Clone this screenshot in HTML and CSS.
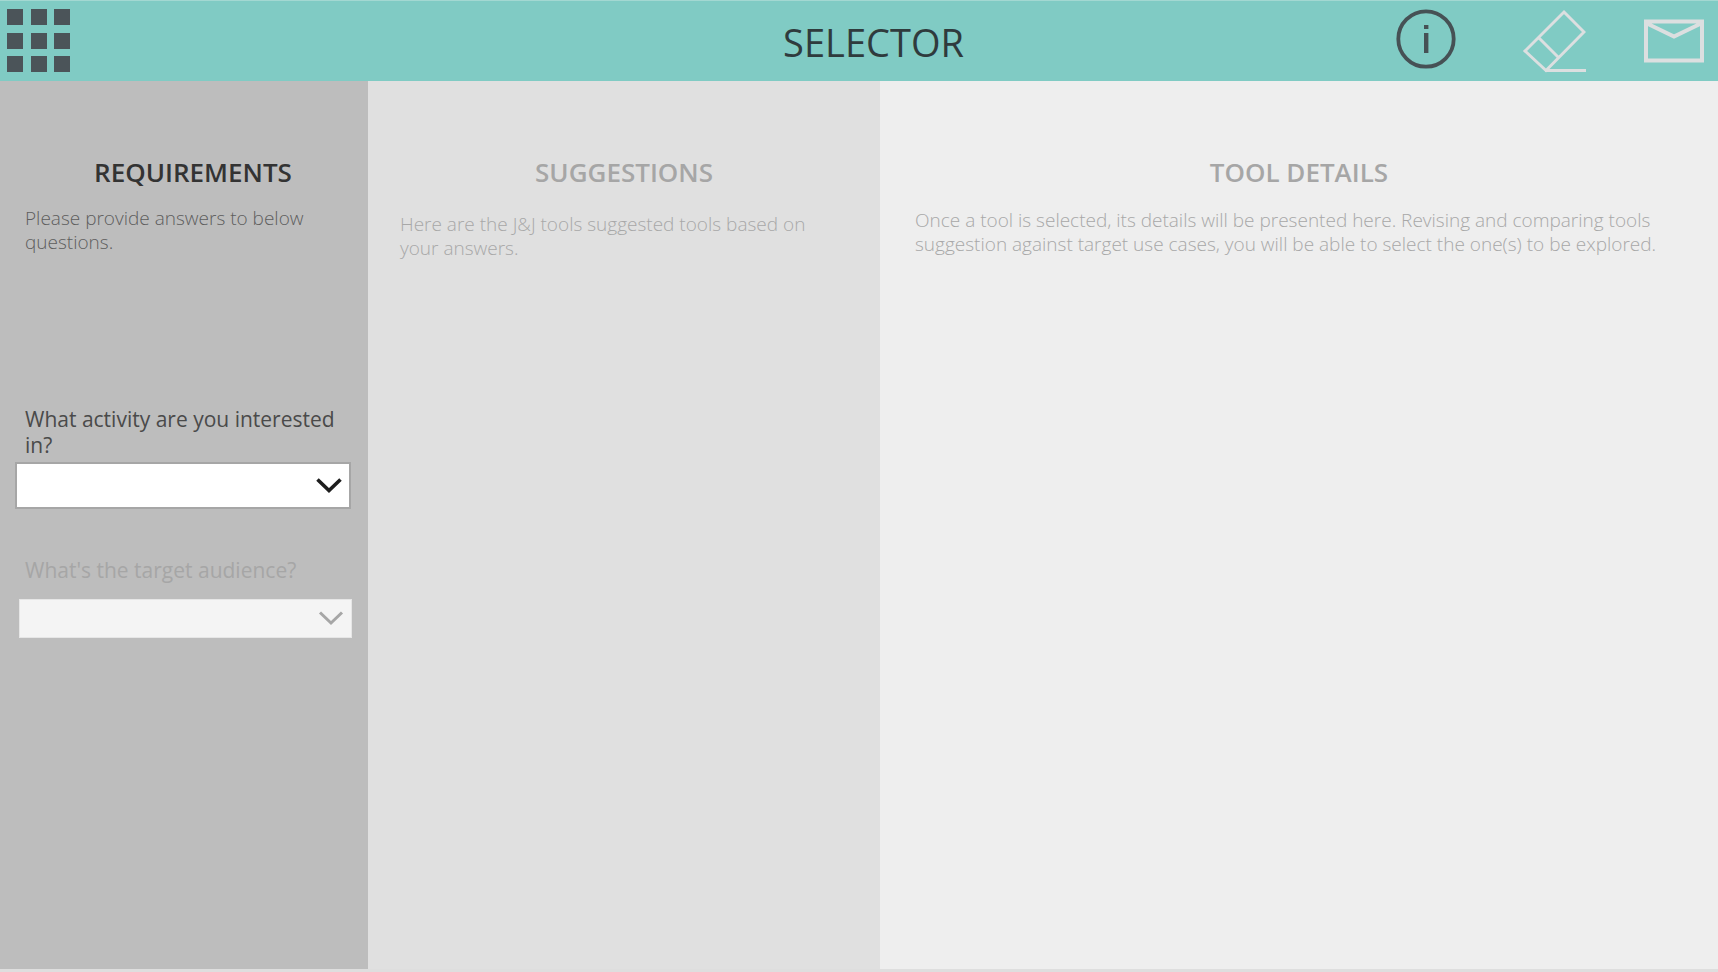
FILE: index.html
```
<!DOCTYPE html>
<html lang="en">
<head>
<meta charset="utf-8">
<meta name="viewport" content="width=device-width, initial-scale=1">
<title>Selector</title>
<link rel="stylesheet" href="styles.css">
</head>
<body>
<header class="topbar">
  <button class="icon-button menu-button" type="button" aria-label="Menu">
    <svg width="64" height="64" viewBox="0 0 64 64" fill="#4b5459">
      <rect x="0" y="0" width="16" height="16"/><rect x="24" y="0" width="16" height="16"/><rect x="47" y="0" width="16" height="16"/>
      <rect x="0" y="24" width="16" height="16"/><rect x="24" y="24" width="16" height="16"/><rect x="47" y="24" width="16" height="16"/>
      <rect x="0" y="47" width="16" height="16"/><rect x="24" y="47" width="16" height="16"/><rect x="47" y="47" width="16" height="16"/>
    </svg>
  </button>
  <h1 class="title">SELECTOR</h1>
  <div class="actions">
    <button class="icon-button" type="button" aria-label="Information">
      <svg width="60" height="64" viewBox="0 0 60 64">
        <circle cx="30" cy="30" r="27.7" fill="none" stroke="#465155" stroke-width="3.8"/>
        <path d="M28 16h4.400v4H28zM28 24h4.400v20H28z" fill="#465155"/>
      </svg>
    </button>
    <button class="icon-button" type="button" aria-label="Clear">
      <svg width="64" height="64" viewBox="0 0 64 64" fill="none" stroke="#dcdfe0" stroke-width="3">
        <path d="M42 3 62 23 24 61.500 3 42ZM16 28 36 48M23 61.500H64"/>
      </svg>
    </button>
    <button class="icon-button" type="button" aria-label="Send mail">
      <svg width="60" height="64" viewBox="0 0 60 64" fill="none" stroke="#dcdfe0" stroke-width="4">
        <path d="M2 12.500H58V51.500H2ZM2 14 30 27.500 58 14"/>
      </svg>
    </button>
  </div>
</header>
<main class="columns">
  <section class="panel requirements">
    <h2 class="heading">REQUIREMENTS</h2>
    <p class="intro">Please provide answers to below questions.</p>
    <form class="questions">
      <div class="field">
        <label class="question" for="activity">What activity are you interested in?</label>
        <div class="select-wrap">
          <select class="select" id="activity"><option value=""></option></select>
          <svg class="chevron" width="26" height="16" viewBox="0 0 26 16" fill="none"><path d="M1.500 1.500 13 12.500 24.500 1.500" stroke="#1e1e1e" stroke-width="3.600"/></svg>
        </div>
      </div>
      <div class="field field-disabled">
        <label class="question" for="audience">What's the target audience?</label>
        <div class="select-wrap">
          <select class="select" id="audience" disabled><option value=""></option></select>
          <svg class="chevron" width="26" height="16" viewBox="0 0 26 16" fill="none"><path d="M2 1.500 13 12 24 1.500" stroke="#a6a6a6" stroke-width="3"/></svg>
        </div>
      </div>
    </form>
  </section>
  <section class="panel suggestions">
    <h2 class="heading">SUGGESTIONS</h2>
    <p class="intro">Here are the J&amp;J tools suggested tools based on your answers.</p>
  </section>
  <section class="panel details">
    <h2 class="heading">TOOL DETAILS</h2>
    <p class="intro">Once a tool is selected, its details will be presented here. Revising and comparing tools suggestion against target use cases, you will be able to select the one(s) to be explored.</p>
  </section>
</main>
</body>
</html>
```
FILE: styles.css
```
* {
  box-sizing: border-box;
}

body {
  margin: 0;
  min-height: 100vh;
  display: flex;
  flex-direction: column;
  background: #dedede;
  font-family: "Segoe UI", "Open Sans", "Noto Sans", sans-serif;
  padding-bottom: 3px;
}

.topbar {
  display: grid;
  grid-template-columns: 1fr auto 1fr;
  align-items: start;
  height: 81px;
  padding: 8px 14px 0 7px;
  border-top: 1px solid #a3d8d2;
  background: #80cbc4;
}

.icon-button {
  display: block;
  padding: 0;
  border: 0;
  background: none;
  cursor: pointer;
}

.icon-button svg {
  display: block;
}

.menu-button {
  justify-self: start;
}

.title {
  margin: 0;
  padding-left: 36px;
  color: #2f3b3d;
  font-size: 38px;
  font-weight: 400;
  line-height: 66px;
}

.actions {
  display: flex;
  justify-content: flex-end;
  gap: 58px;
}

.actions .icon-button:nth-child(2) {
  margin-left: 8px;
}

.columns {
  flex: 1;
  display: grid;
  grid-template-columns: 368fr 512fr 838fr;
}

.panel {
  padding-top: 73px;
  color: #a8a8a8;
}

.heading {
  margin: 0;
  color: #a6a6a6;
  font-size: 26px;
  font-weight: 600;
  line-height: 36px;
  text-align: center;
}

.intro {
  margin: 0;
  font-size: 19px;
  font-weight: 300;
  line-height: 24px;
}

.requirements {
  padding-right: 17px;
  padding-left: 15px;
  background: #bdbdbd;
}

.requirements .heading {
  padding-left: 20px;
  color: #333333;
}

.requirements .intro {
  margin-top: 16px;
  padding: 0 10px;
  color: #5e5e5e;
}

.suggestions {
  padding-right: 32px;
  padding-left: 32px;
  background: #e0e0e0;
}

.suggestions .intro {
  margin-top: 22px;
}

.details {
  padding-right: 35px;
  padding-left: 35px;
  background: #eeeeee;
}

.details .intro {
  margin-top: 18px;
}

.questions {
  margin-top: 152px;
}

.question {
  display: block;
  padding-left: 10px;
  color: #4a4a4a;
  font-size: 21px;
  line-height: 26px;
}

.select-wrap {
  position: relative;
  margin-top: 4px;
}

.select {
  display: block;
  width: 100%;
  height: 47px;
  padding: 0 40px 0 10px;
  border: 2px solid #a6a6a6;
  border-radius: 0;
  background: #ffffff;
  font: inherit;
  appearance: none;
}

.chevron {
  position: absolute;
  top: 16px;
  right: 9px;
  pointer-events: none;
}

.field-disabled {
  margin-top: 48px;
}

.field-disabled .question {
  color: #a6a6a6;
}

.field-disabled .select-wrap {
  margin-top: 16px;
  margin-right: -1px;
  margin-left: 4px;
}

.field-disabled .select {
  height: 39px;
  border: 1px solid #e6e6e6;
  background: #f4f4f4;
  opacity: 1;
}

.field-disabled .chevron {
  top: 12px;
  right: 8px;
}
```
